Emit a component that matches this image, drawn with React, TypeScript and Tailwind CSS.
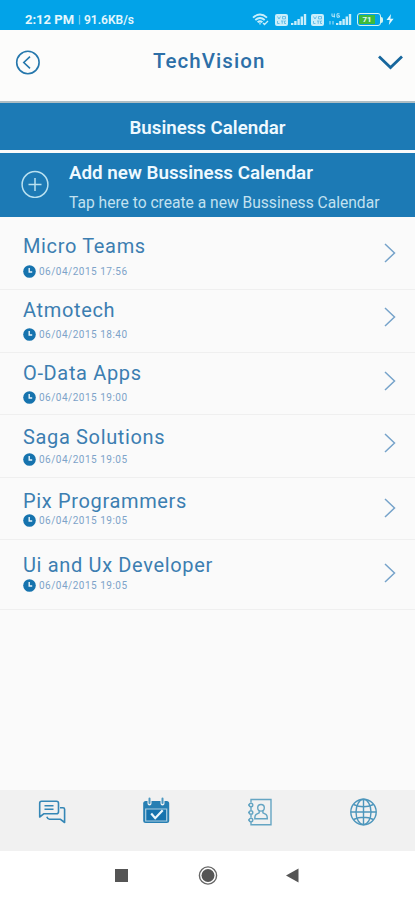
import React from "react";

type Row = {
  title: string;
  date: string;
  height: string;
  top: string;
  gap: string;
  chevron: string;
};

const rows: Row[] = [
  { title: "Micro Teams", date: "06/04/2015 17:56", height: "h-[73px]", top: "pt-[17px]", gap: "mt-[6px]", chevron: "mt-[26px]" },
  { title: "Atmotech", date: "06/04/2015 18:40", height: "h-[63px]", top: "pt-[8px]", gap: "mt-[5px]", chevron: "mt-[17px]" },
  { title: "O-Data Apps", date: "06/04/2015 19:00", height: "h-[62px]", top: "pt-[8px]", gap: "mt-[5px]", chevron: "mt-[18px]" },
  { title: "Saga Solutions", date: "06/04/2015 19:05", height: "h-[63px]", top: "pt-[10px]", gap: "mt-[3px]", chevron: "mt-[18px]" },
  { title: "Pix Programmers", date: "06/04/2015 19:05", height: "h-[62px]", top: "pt-[11px]", gap: "mt-0", chevron: "mt-[20px]" },
  { title: "Ui and Ux Developer", date: "06/04/2015 19:05", height: "h-[70px]", top: "pt-[13px]", gap: "mt-px", chevron: "mt-[23px]" },
];

function Wifi() {
  return (
    <svg width="17" height="13" viewBox="0 0 17 13" fill="none" stroke="#c9eefb" strokeWidth="1.9">
      <path d="M1 4.6Q8 -1.4 15 4.6M3.3 7Q8 3 12.7 7M5.6 9.3Q8 7.3 10.4 9.3" />
      <path d="M8 9.5v2M11 10l1.5 1.5L16 8" strokeWidth="1.3" />
    </svg>
  );
}

function Volte() {
  return (
    <svg width="13" height="12" viewBox="0 0 13 12">
      <rect width="13" height="12" rx="2" fill="#c9eefb" />
      <path d="M2.5 2.5l1.5 2.5 1.5-2.5M7.5 2.5h3v2.4h-3zM2.5 7v2.5h2M6 7h2.5M7.2 7v2.8M11 7H9.5v2.5H11" fill="none" stroke="#5cbae6" strokeWidth="0.9" />
    </svg>
  );
}

function Signal({ small = false }: { small?: boolean }) {
  return (
    <svg width={small ? 23 : 16} height="13" viewBox={small ? "-7 0 23 13" : "0 0 16 13"} fill="#c9eefb">
      <path d="M0 10h2.4v2H0zM3.2 8h2.4v4H3.2zM6.4 6h2.4v6H6.4zM9.6 3.5H12V12H9.6zM12.8 1h2.4v11h-2.4z" />
      {small && (
        <>
          <path d="M-4 .5v2.8h3M-1.7 .5v4M3.5 .8H1v3.4h2.4V2.7H2" fill="none" stroke="#c9eefb" strokeWidth="0.9" />
          <path d="M-6 8v3.5M-3 11.5V8" fill="none" stroke="#8bd5f5" strokeWidth="1.3" />
        </>
      )}
    </svg>
  );
}

function StatusBar() {
  return (
    <div className="flex h-[30px] shrink-0 items-start bg-[#02a3e8] text-[#e3f7fd]">
      <div className="ml-[25px] mt-[12px] flex items-center leading-[16px] whitespace-nowrap">
        <span className="w-[53px] text-[13px] font-bold">2:12 PM</span>
        <span className="w-[6px] text-[11px] opacity-70">|</span>
        <span className="text-[12px] font-semibold">91.6KB/s</span>
      </div>
      <div className="mr-[21px] ml-auto mt-[13px] flex items-center">
        <Wifi />
        <span className="ml-[6px]"><Volte /></span>
        <span className="ml-[3px]"><Signal /></span>
        <span className="ml-[4px]"><Volte /></span>
        <span className="ml-[5px]"><Signal small /></span>
        <span className="ml-[5px] flex h-[13px] w-[24px] items-center rounded-[3px] border-[1.5px] border-[#d5f4ee] p-px">
          <span className="flex h-full w-[16px] items-center justify-center bg-[#3dbb3b] text-[8px] leading-none font-bold">71</span>
        </span>
        <span className="h-[6px] w-[2px] rounded-r bg-[#d5f4ee]" />
        <svg className="ml-[3px]" width="8" height="11" viewBox="0 0 8 11"><path d="M5 0L.5 6H3.7L2.8 11 7.6 4.7H4.4z" fill="#e3f7fd" /></svg>
      </div>
    </div>
  );
}

function ClockIcon() {
  return (
    <svg width="13" height="13" viewBox="0 0 13 13">
      <circle cx="6.5" cy="6.5" r="6.3" fill="#1673ae" />
      <path d="M6.2 3v4h3" fill="none" stroke="#e8f4fa" strokeWidth="1.4" />
    </svg>
  );
}

function TabBar() {
  return (
    <div className="flex h-[61px] shrink-0 items-start bg-[#f1f1f1] pt-[7px]">
      <svg className="ml-[38px]" width="28" height="28" viewBox="0 0 28 28" fill="none" stroke="#3587b6" strokeWidth="1.6" strokeLinejoin="round">
        <path d="M3.500 4.200h15q2 0 2 2v8.500q0 2-2 2H6L1.700 20V6.200q0-2 1.800-2z" />
        <path d="M6.500 8.700h9M6.500 12.200h9" />
        <path d="M22 10.700h3q1.600 0 1.600 1.600v13.200L22.500 22.300H11.500q-1.700 0-2.700-2.600" />
      </svg>
      <svg className="ml-[76px]" width="28" height="30" viewBox="0 0 28 30">
        <rect x="1.200" y="4" width="26" height="22" rx="2.500" fill="#277fb3" />
        <path d="M3.700 12h21v12h-21z" fill="#1673ae" stroke="#add0e2" strokeWidth="1.200" />
        <path d="M7.500 1.500v5M20.500 1.500v5" stroke="#f1f1f1" strokeWidth="4" strokeLinecap="round" />
        <path d="M7.500 1.500v4.500M20.500 1.500v4.500" stroke="#4d98c1" strokeWidth="2" strokeLinecap="round" />
        <path d="M9.200 16.500l4 4.700 7.500-8" fill="none" stroke="#e9f6fc" strokeWidth="2.200" />
      </svg>
      <svg className="ml-[77px]" width="26" height="30" viewBox="0 0 26 30" fill="none" stroke="#65a5c3" strokeWidth="1.400">
        <path d="M4 5.500V2.500h20v25.300H4V25M4 10v3M4 18v2.500" />
        <circle cx="4" cy="8" r="1.800" /><circle cx="4" cy="15.500" r="1.800" /><circle cx="4" cy="23" r="1.800" />
        <path d="M1 8h2M1 15.500h2M1 23h2" />
        <circle cx="14" cy="10.800" r="3.300" />
        <path d="M12.200 13.500v2.300l-3 1.500q-1.400.8-1.400 4.500h12.500q0-3.700-1.400-4.500l-3-1.500v-2.300" />
      </svg>
      <svg className="ml-[76px]" width="28" height="29" viewBox="0 0 28 29" fill="none" stroke="#4d96bc" strokeWidth="1.400">
        <circle cx="14.500" cy="15" r="12.700" />
        <ellipse cx="14.500" cy="15" rx="7.500" ry="12.700" />
        <path d="M14.500 2.300v25.400M1.800 15h25.400M4.500 7.500q10 4.500 20 0M4.500 22.500q10-4.500 20 0" />
      </svg>
    </div>
  );
}

export default function App() {
  return (
    <div className="flex h-[900px] w-[415px] flex-col overflow-hidden bg-[#fafafa] font-['Roboto',sans-serif]">
      <StatusBar />
      <header className="flex h-[73px] shrink-0 items-start border-b-2 border-[#aebec4] bg-[#fcfcfb]">
        <svg className="ml-[15px] mt-[20px]" width="26" height="26" viewBox="0 0 26 26" fill="none" stroke="#2577ac">
          <circle cx="12.900" cy="12.500" r="11.200" strokeWidth="1.600" />
          <path d="M15 6.700L8.800 12.500 15 18.300" strokeWidth="1.600" />
        </svg>
        <h1 className="ml-[112px] mt-[19px] w-[120px] text-[20.5px] leading-[24px] font-medium tracking-[1.050px] whitespace-nowrap text-[#2d6fa7]">TechVision</h1>
        <svg className="ml-[105px] mt-[25px]" width="26" height="16" viewBox="0 0 26 16" fill="none" stroke="#17679d" strokeWidth="2.800">
          <path d="M1 1.500L12.500 12.500 24 1.500" />
        </svg>
      </header>
      <div className="h-[47px] shrink-0 bg-[#1c7ab5] text-center text-[18.7px] leading-[51px] font-semibold text-[#eef9ff]">Business Calendar</div>
      <div className="mt-[3px] flex h-[64px] shrink-0 items-start bg-[#1c7ab5]">
        <svg className="ml-[21px] mt-[17px]" width="28" height="28" viewBox="0 0 28 28" fill="none" stroke="#b9e1f0" strokeWidth="1.500">
          <circle cx="14" cy="14.500" r="12.900" />
          <path d="M14 8v13M7.500 14.500h13" />
        </svg>
        <div className="ml-[20px] mt-[8px] whitespace-nowrap">
          <div className="text-[18.8px] leading-[24px] font-semibold text-[#eef9ff]">Add new Bussiness Calendar</div>
          <div className="mt-[8px] text-[15.6px] leading-[20px] text-[#c2e1f0]">Tap here to create a new Bussiness Calendar</div>
        </div>
      </div>
      <main className="grow">
        {rows.map((r) => (
          <div key={r.title} className={`flex items-start border-b border-[#efefef] ${r.height}`}>
            <div className={`ml-[23px] grow whitespace-nowrap ${r.top}`}>
              <div className="text-[20px] leading-[24px] tracking-[0.650px] text-[#3c7eb1]">{r.title}</div>
              <div className={`flex h-[14px] items-center gap-[3px] ${r.gap}`}>
                <ClockIcon />
                <span className="pt-px text-[10px] leading-[14px] tracking-[0.5px] text-[#7da3c9]">{r.date}</span>
              </div>
            </div>
            <svg className={`mr-[19px] ${r.chevron}`} width="12" height="20" viewBox="0 0 12 20" fill="none" stroke="#76a3ca" strokeWidth="1.500">
              <path d="M1 1l9.500 9L1 19" />
            </svg>
          </div>
        ))}
      </main>
      <TabBar />
      <div className="flex h-[49px] shrink-0 items-start bg-white pt-[12px]">
        <div className="mt-[6px] ml-[115px] size-[13px] bg-[#555]" />
        <svg className="ml-[70px] mt-[2px]" width="20" height="20" viewBox="0 0 20 20">
          <circle cx="10" cy="10.500" r="8.600" fill="white" stroke="#666" strokeWidth="1.400" />
          <circle cx="10" cy="10.500" r="6.500" fill="#555" />
        </svg>
        <svg className="ml-[68px] mt-[5px]" width="13" height="15" viewBox="0 0 13 15"><path d="M0 7.500L12.500 .5v14z" fill="#555" /></svg>
      </div>
    </div>
  );
}
